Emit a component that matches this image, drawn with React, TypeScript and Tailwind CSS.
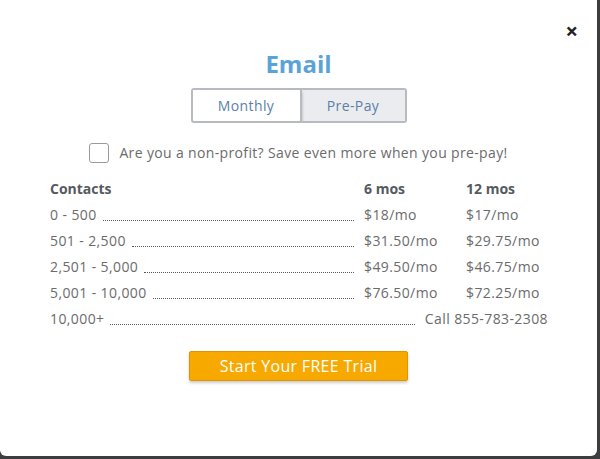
import React from 'react'

const ROWS = [
  { range: '0 - 500', six: '$18/mo', twelve: '$17/mo' },
  { range: '501 - 2,500', six: '$31.50/mo', twelve: '$29.75/mo' },
  { range: '2,501 - 5,000', six: '$49.50/mo', twelve: '$46.75/mo' },
  { range: '5,001 - 10,000', six: '$76.50/mo', twelve: '$72.25/mo' },
]

function Leader() {
  return <span className="flex-1 mx-[6px] mb-[4px] border-b border-dotted border-[#555]" />
}

export default function App() {
  return (
    <div className="w-[600px] h-[459px] bg-[#3b3d40] overflow-hidden" style={{ fontFamily: '"Open Sans", "Liberation Sans", sans-serif' }}>
      <div className="relative w-[597px] h-[456px] bg-white rounded-b-[6px] flex flex-col items-center">
        {/* close */}
        <button className="absolute top-[19px] right-[19px] text-[#222] text-[22px] font-bold leading-none">×</button>

        <h1 className="mt-[48px] text-[24px] leading-[32px] font-bold text-[#5aa3d9]">Email</h1>

        {/* billing toggle */}
        <div className="mt-[8px] flex border-2 border-[#b7babf] rounded-[3px] overflow-hidden">
          <button className="w-[109px] h-[31px] bg-white text-[14px] text-[#5b7fa6] tracking-[0.4px] shadow-[0_2px_3px_rgba(0,0,0,0.25)] border-r-2 border-[#b7babf] z-10">Monthly</button>
          <button className="w-[103px] h-[31px] bg-[#ebecef] text-[14px] text-[#5b7fa6] tracking-[0.4px]">Pre-Pay</button>
        </div>

        <label className="mt-[19px] flex items-center gap-[10px] text-[14px] text-[#6b6b6b] tracking-[0.35px]">
          <span className="w-[20px] h-[20px] border border-[#9a9a9a] rounded-[3px] bg-white" />
          Are you a non-profit? Save even more when you pre-pay!
        </label>

        {/* pricing table */}
        <div className="mt-[12px] w-[498px] self-start ml-[50px] text-[14px] text-[#6b6b6b] tracking-[0.4px]">
          <div className="flex h-[26px] items-center font-bold text-[#555a60] tracking-normal">
            <span className="flex-1">Contacts</span>
            <span className="w-[102px]">6 mos</span>
            <span className="w-[82px]">12 mos</span>
          </div>
          {ROWS.map((r) => (
            <div key={r.range} className="flex h-[26px] items-end pb-[2px]">
              <span>{r.range}</span>
              <Leader />
              <span className="w-[102px] ml-[4px]">{r.six}</span>
              <span className="w-[82px]">{r.twelve}</span>
            </div>
          ))}
          <div className="flex h-[26px] items-end pb-[2px]">
            <span>10,000+</span>
            <Leader />
            <span className="ml-[4px]">Call 855-783-2308</span>
          </div>
        </div>

        <button className="mt-[20px] w-[219px] h-[30px] bg-[#f7a900] border border-[#e09500] rounded-[2px] text-white text-[16px] tracking-[0.3px] shadow-[0_2px_3px_rgba(0,0,0,0.2)]">
          Start Your FREE Trial
        </button>
      </div>
    </div>
  )
}
